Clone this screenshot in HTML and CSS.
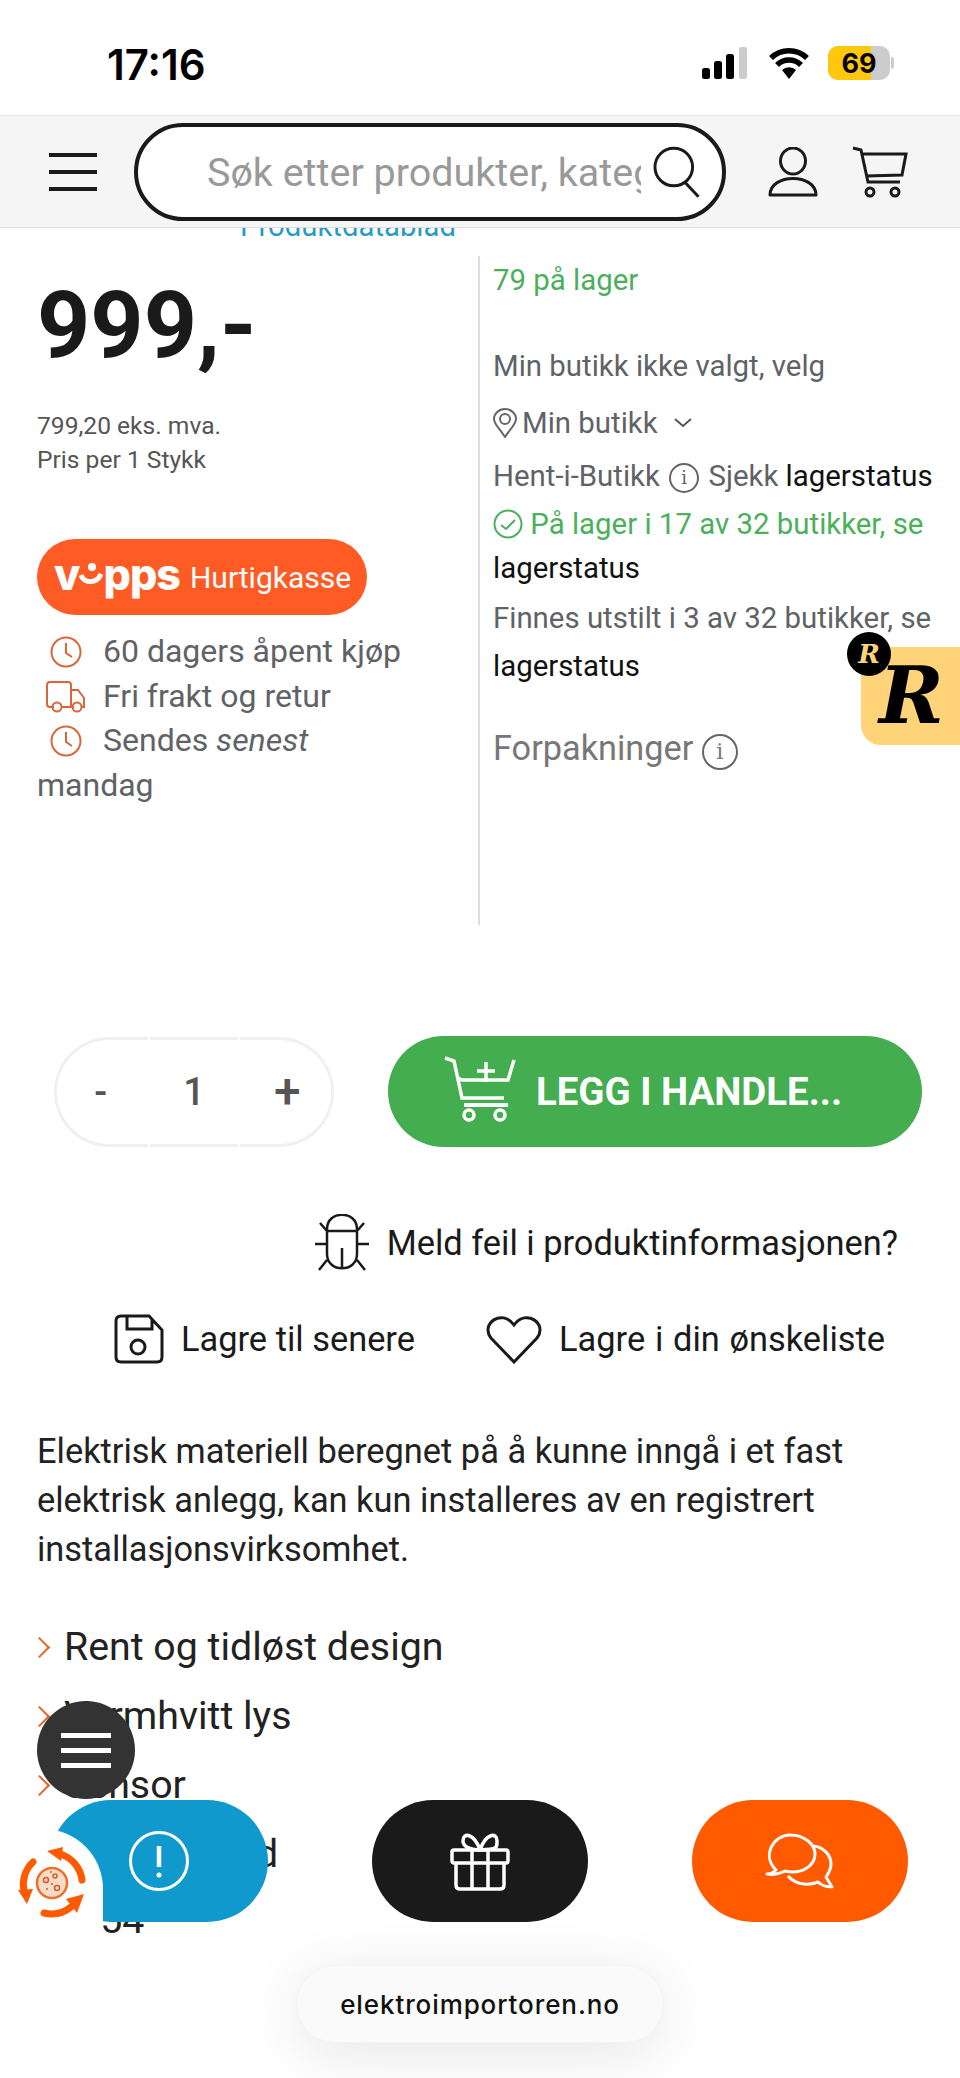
FILE: index.html

```html
<!DOCTYPE html>
<html lang="no">
<head>
    <meta charset="UTF-8">
    <title>Elektroimportoren</title>
    <link rel="stylesheet" href="styles.css">
</head>
<body>
<div class="page">
    <div class="status">
        <span class="time">17:16</span>
        <div class="status-icons">
            <svg width="48" height="32" viewBox="0 0 48 32"><rect x="0" y="21" width="8" height="11" rx="2.5" fill="#000"/><rect x="12" y="14" width="8" height="18" rx="2.5" fill="#000"/><rect x="24" y="7" width="8" height="25" rx="2.5" fill="#000"/><rect x="37" y="0" width="8" height="32" rx="2.5" fill="#ccc"/></svg>
            <svg width="42" height="32" viewBox="0 0 42 32"><path d="M3 11a26 26 0 0 1 36 0M9 18a17 17 0 0 1 24 0" fill="none" stroke="#000" stroke-width="5.5"/><path d="M14 23a10 10 0 0 1 14 0l-7 9z" fill="#000"/></svg>
            <div class="battery"><span class="battery-level"></span><span class="battery-text">69</span></div>
            <span class="battery-nub"></span>
        </div>
    </div>

    <div class="topbar">
        <svg class="burger" width="48" height="40" viewBox="0 0 48 40"><path d="M0 3h48M0 20h48M0 37h48" stroke="#1a1a1a" stroke-width="4"/></svg>
        <div class="search">
            <span class="search-text">Søk etter produkter, kategorier</span>
            <svg width="52" height="52" viewBox="0 0 52 52" fill="none" stroke="#1a1a1a" stroke-width="3"><circle cx="21" cy="21" r="19"/><path d="M32 36l14 15"/></svg>
        </div>
        <svg class="user" width="50" height="50" viewBox="0 0 50 50" fill="none" stroke="#1a1a1a" stroke-width="3"><ellipse cx="25" cy="14" rx="12.5" ry="13"/><path d="M2 48c0-22 46-22 46 0z" stroke-linejoin="round"/></svg>
        <svg class="cart" width="56" height="52" viewBox="0 0 56 52" fill="none" stroke="#1a1a1a" stroke-width="3"><path d="M1 2l8 2 7 32h32M10 8h44l-4 21-36 1"/><circle cx="18" cy="46" r="4"/><circle cx="43" cy="46" r="4"/></svg>
    </div>

    <div class="datablad"><a>Produktdatablad</a></div>

    <div class="columns">
        <div class="col-left">
            <div class="price">999,-</div>
            <p class="price-note">799,20 eks. mva.</p>
            <p class="price-note">Pris per 1 Stykk</p>
            <div class="vipps">
                <span class="vipps-logo">v<svg width="24" height="32" viewBox="0 0 24 32"><circle cx="13" cy="9" r="4" fill="#fff"/><path d="M2 17c3 9 16 9 20-1" fill="none" stroke="#fff" stroke-width="5"/></svg>pps</span>
                <span class="vipps-text">Hurtigkasse</span>
            </div>
            <div class="perks">
                <svg class="perk-icon" width="32" height="32" viewBox="0 0 32 32" fill="none" stroke="#d9663a" stroke-width="2"><circle cx="16" cy="16" r="14.5"/><path d="M16 7v10l6 4"/></svg>60 dagers åpent kjøp<br>
                <svg class="perk-icon truck" width="40" height="32" viewBox="0 0 40 32" fill="none" stroke="#d9663a" stroke-width="2"><path d="M8 26H4q-3 0-3-3V4q0-3 3-3h18q3 0 3 3v22H15M25 9h7l6 8v9h-3M25 26h3"/><circle cx="11" cy="26" r="4.5"/><circle cx="31" cy="26" r="4.5"/></svg>Fri frakt og retur<br>
                <svg class="perk-icon" width="32" height="32" viewBox="0 0 32 32" fill="none" stroke="#d9663a" stroke-width="2"><circle cx="16" cy="16" r="14.5"/><path d="M16 7v10l6 4"/></svg>Sendes <em>senest</em> mandag
            </div>
        </div>
        <div class="col-right">
            <p class="green stock-count">79 på lager</p>
            <p class="store-none">Min butikk ikke valgt, velg</p>
            <p class="store-pick">
                <svg width="24" height="30" viewBox="0 0 24 30" fill="none" stroke="#666" stroke-width="2"><path d="M12 29C6 20 1 16 1 11a11 10 0 0 1 22 0c0 5-5 9-11 18z"/><circle cx="12" cy="11" r="5"/></svg>
                <span>Min butikk</span>
                <svg class="chevron" width="18" height="10" viewBox="0 0 18 10" fill="none" stroke="#555" stroke-width="2"><path d="M1 1l8 7 8-7"/></svg>
            </p>
            <p class="pickup">Hent-i-Butikk <span class="info">i</span> Sjekk <span class="link">lagerstatus</span></p>
            <p class="green in-stock"><svg width="30" height="30" viewBox="0 0 30 30" fill="none" stroke="#4caf5c" stroke-width="2"><circle cx="15" cy="15" r="13.5"/><path d="M8 16l5 4 9-9"/></svg> På lager i 17 av 32 butikker, se</p>
            <p class="link status-link">lagerstatus</p>
            <p class="shown">Finnes utstilt i 3 av 32 butikker, se</p>
            <p class="link status-link2">lagerstatus</p>
            <p class="packs">Forpakninger <span class="info big">i</span></p>
        </div>
    </div>

    <div class="buy-row">
        <div class="qty"><span class="qty-minus">-</span><span class="qty-num">1</span><span class="qty-plus">+</span></div>
        <div class="buy">
            <svg width="74" height="66" viewBox="0 0 74 66" fill="none" stroke="#fff" stroke-width="3.5"><path d="M1 2l9 3 8 37h42M14 22l4 2h46l6-20M42 6v20M33 15h18" /><path d="M20 49h44" stroke-width="4"/><circle cx="25" cy="59" r="5"/><circle cx="56" cy="59" r="5"/></svg>
            <span>LEGG I HANDLE...</span>
        </div>
    </div>

    <div class="report">
        <svg width="58" height="58" viewBox="0 0 58 58" fill="none" stroke="#1a1a1a" stroke-width="2.5"><path d="M14 15c0-19 30-19 30 0v25c0 19-30 19-30 0zM14 17h30M29 34v20M14 30H2M44 30h12M14 17L7 9M44 17l7-8M14 46l-8 10M44 46l8 10"/></svg>
        <span>Meld feil i produktinformasjonen?</span>
    </div>

    <div class="save-row">
        <div class="save-item">
            <svg width="50" height="50" viewBox="0 0 50 50" fill="none" stroke="#1a1a1a" stroke-width="3"><path d="M7 2h28l13 14v27q0 5-5 5H7q-5 0-5-5V7q0-5 5-5zM13 2v13h25V6"/><circle cx="24" cy="33" r="7"/></svg>
            <span>Lagre til senere</span>
        </div>
        <div class="save-item wish">
            <svg width="56" height="50" viewBox="0 0 56 50" fill="none" stroke="#1a1a1a" stroke-width="3"><path d="M28 48L5 24C-6 10 16-6 28 11 40-6 62 10 51 24z"/></svg>
            <span>Lagre i din ønskeliste</span>
        </div>
    </div>

    <p class="desc">Elektrisk materiell beregnet på å kunne inngå i et fast elektrisk anlegg, kan kun installeres av en registrert installasjonsvirksomhet.</p>

    <ul class="features">
        <li>Rent og tidløst design</li>
        <li>Varmhvitt lys</li>
        <li>Sensor</li>
        <li class="tight">Tetthetsgrad</li>
        <li class="sub">IP 54</li>
    </ul>

    <!-- floating stuff on top of the page -->
    <div class="retool">
        <span class="retool-big">R</span>
        <span class="retool-small">R</span>
    </div>

    <div class="fab fab-blue">
        <svg width="60" height="60" viewBox="0 0 60 60" fill="none" stroke="#fff" stroke-width="3"><circle cx="30" cy="30" r="28.5"/><path d="M30 15v21" stroke-width="4.5"/><circle cx="30" cy="44" r="2.5" fill="#fff" stroke="none"/></svg>
    </div>
    <div class="fab fab-black">
        <svg width="60" height="60" viewBox="0 0 60 60" fill="none" stroke="#fff" stroke-width="3.5" stroke-linejoin="round"><rect x="2" y="19" width="56" height="13" rx="2"/><path d="M6 32v22q0 4 4 4h40q4 0 4-4V32M22 19v39M38 19v39M30 19C24 2 13 1 13 10q0 8 17 9c17-1 17-1 17-9 0-9-11-8-17 9z"/></svg>
    </div>
    <div class="fab fab-orange">
        <svg width="72" height="56" viewBox="0 0 72 56" fill="none" stroke="#fff" stroke-width="3" stroke-linejoin="round"><path d="M3 41c5 0 7-2 9-4C-3 22 10 2 26 2c14 0 25 9 25 19 0 12-14 21-30 17-6 3-13 4-18 3z"/><path d="M48 13c11 0 19 9 19 18 0 6-3 10-5 13l6 10c-6 0-11-2-14-5-12 5-24 1-30-6"/></svg>
    </div>
    <div class="logo-mask">
        <svg width="72" height="72" viewBox="0 0 72 72">
            <g fill="none" stroke="#ff5a00" stroke-width="7" stroke-linecap="round"><path d="M66 33A31 31 0 0 0 44 7"/><path d="M17 15A31 31 0 0 0 8 44"/><path d="M28 66A31 31 0 0 0 55 60"/></g>
            <g fill="#ff5a00"><path d="M31 4L47 0l-2 14z"/><path d="M11 57L2 43l15-1z"/><path d="M68 47L50 52l11 14z"/></g>
            <circle cx="36" cy="36" r="15" fill="#f9dcc6" stroke="#ee6f2e" stroke-width="2.5"/>
            <g fill="none" stroke="#d9562a" stroke-width="1.5"><circle cx="30" cy="33" r="2.5"/><circle cx="39" cy="29" r="2"/><circle cx="41" cy="41" r="2.5"/></g>
            <g fill="#d9562a"><circle cx="36" cy="37" r="1"/><circle cx="31" cy="42" r="1"/><circle cx="35" cy="25" r="1"/></g>
        </svg>
    </div>
    <div class="round-menu"><span></span><span></span><span></span></div>

    <div class="url-pill">elektroimportoren.no</div>
</div>
</body>
</html>
```

FILE: styles.css

```css
* { box-sizing: border-box; }
body { margin: 0; background: #fff; font-family: Roboto, "Liberation Sans", sans-serif; color: #555; }
p { margin: 0; }
.page { position: relative; width: 960px; height: 2078px; overflow: hidden; background: #fff; }

.status { height: 116px; display: flex; justify-content: space-between; align-items: center; padding: 0 66px 0 107px; border-bottom: 1px solid #e8e4e4; }
.time { font-family: Inter, sans-serif; font-weight: 600; font-size: 42px; color: #000; margin-top: 13px; }
.status-icons { display: flex; align-items: center; margin-top: 11px; }
.status-icons svg { margin-right: 18px; }
.battery { position: relative; width: 62px; height: 34px; border-radius: 10px; background: #ccc; overflow: hidden; display: flex; justify-content: center; align-items: center; }
.battery-level { position: absolute; left: 0; top: 0; width: 69%; height: 100%; background: #fdc70c; }
.battery-text { position: relative; font-family: Inter, sans-serif; font-weight: 700; font-size: 27px; color: #000; }
.battery-nub { width: 3px; height: 12px; background: #ccc; border-radius: 0 3px 3px 0; margin-left: 1px; }

.topbar { position: relative; height: 112px; background: #f5f5f5; border-bottom: 1px solid #ddd; display: flex; align-items: center; padding-left: 49px; }
.search { width: 592px; height: 98px; margin-left: 37px; border: 4.5px solid #1a1a1a; border-radius: 49px; background: #fff; display: flex; align-items: center; padding: 0 18px 0 69px; }
.search-text { width: 438px; overflow: hidden; white-space: nowrap; font-size: 39.5px; line-height: 50px; margin-top: 2px; color: #999; margin-right: 12px; }
.user { margin-left: 42px; }
.cart { margin-left: 34px; }

.datablad { height: 14px; overflow: hidden; display: flex; align-items: flex-end; padding-left: 240px; }
.datablad a { font-size: 29.3px; line-height: 34px; margin-bottom: -1px; color: #2a9ac4; flex: none; }

.columns { display: grid; grid-template-columns: 478px 1fr; height: 681px; padding-top: 14px; }
.col-left { padding: 0 70px 0 37px; }
.price { font-size: 93px; font-weight: 700; color: #1a1a1a; line-height: 100px; margin-top: 20px; }
.price-note { font-size: 24.6px; line-height: 34px; color: #555; }
.price-note:first-of-type { margin-top: 33px; }
.vipps { width: 330px; height: 76px; margin-top: 62px; border-radius: 38px; background: #ff5b24; color: #fff; display: flex; align-items: center; padding-left: 17px; }
.vipps-logo { font-family: Inter, sans-serif; font-weight: 800; font-size: 43px; letter-spacing: -1px; display: inline-flex; align-items: center; margin-right: 10px; line-height: 1; margin-top: -6px; }
.vipps-text { font-size: 30px; }
.perks { font-size: 32px; line-height: 44.5px; margin-top: 14px; color: #5f6266; }
.perk-icon { vertical-align: -6px; margin: 0 21px 0 13px; }
.perk-icon.truck { margin: 0 17px 0 9px; }

.col-right { border-left: 2px solid #ddd; padding-left: 13px; height: 669px; font-size: 29.4px; color: #5f6266; }
.green { color: #4caf5c; }
.link { color: #111; }
.stock-count { line-height: 34px; margin-top: 7px; }
.store-none { line-height: 34px; margin-top: 52px; }
.store-pick { display: flex; align-items: center; line-height: 34px; margin-top: 23px; }
.store-pick svg { margin-right: 5px; }
.store-pick .chevron { margin-left: 16px; }
.pickup { line-height: 34px; margin-top: 19px; }
.info { display: inline-block; width: 30px; height: 30px; border: 2px solid #666; border-radius: 50%; font-family: "DejaVu Serif", serif; font-size: 18px; line-height: 26px; text-align: center; vertical-align: 2px; margin: 0 2px; }
.in-stock { line-height: 34px; margin-top: 14px; }
.in-stock svg { vertical-align: -5px; }
.status-link { line-height: 34px; margin-top: 10px; }
.shown { line-height: 34px; margin-top: 16px; }
.status-link2 { line-height: 34px; margin-top: 14px; }
.packs { font-size: 34.3px; line-height: 40px; margin-top: 45px; color: #777; }
.info.big { width: 36px; height: 36px; font-size: 22px; line-height: 32px; margin: 0; vertical-align: 1px; }

.buy-row { display: flex; align-items: center; padding-left: 54px; margin-top: 113px; }
.qty { width: 280px; height: 110px; display: flex; gap: 2px; font-size: 38px; color: #555; font-weight: 500; }
.qty span { flex: 1; display: flex; align-items: center; justify-content: center; border: solid #f0f0f0; border-width: 3px 0; }
.qty-minus { border-left-width: 3px !important; border-radius: 55px 0 0 55px; padding-right: 4px; }
.qty-plus { border-right-width: 3px !important; border-radius: 0 55px 55px 0; font-size: 48px; padding-left: 4px; }
.buy { width: 534px; height: 111px; margin-left: 54px; border-radius: 56px; background: #43ad4f; color: #fff; display: flex; align-items: center; padding-left: 56px; font-size: 38.4px; font-weight: 700; white-space: nowrap; }
.buy svg { margin-right: 18px; margin-top: -6px; }

.report { display: flex; justify-content: flex-end; align-items: center; padding-right: 62px; margin-top: 67px; font-size: 34.4px; color: #1a1a1a; }
.report svg { margin-right: 16px; }
.save-row { display: flex; justify-content: space-between; padding: 0 75px 0 114px; margin-top: 42px; font-size: 34.4px; color: #1a1a1a; }
.save-item { display: flex; align-items: center; }
.save-item svg { margin-right: 17px; }
.wish { word-spacing: 1.2px; }

.desc { padding: 0 37px; margin-top: 63px; font-size: 34.4px; line-height: 49px; color: #222; }
.features { list-style: none; margin: 51px 0 0; padding: 0 0 0 64px; font-size: 39.3px; color: #222; }
.features li { position: relative; height: 69px; line-height: 44px; }
.features li::before { content: ""; position: absolute; left: -32px; top: 15px; width: 13px; height: 13px; border-top: 2.5px solid #e8622a; border-right: 2.5px solid #e8622a; transform: rotate(45deg); }
.features li.tight { letter-spacing: -.7px; }
.features li.sub { word-spacing: -9px; margin-top: -3px; }
.features li.sub::before { display: none; }

.retool { position: absolute; left: 861px; top: 647px; width: 99px; height: 98px; background: #ffd479; border-radius: 20px 0 0 20px; }
.retool-big { position: absolute; left: 18px; top: 5px; font-family: "DejaVu Serif", serif; font-weight: 700; font-style: italic; font-size: 78px; line-height: 88px; color: #000; }
.retool-small { position: absolute; left: -14px; top: -15px; width: 44px; height: 44px; border-radius: 50%; background: #000; color: #ffd479; font-family: "DejaVu Serif", serif; font-weight: 700; font-style: italic; font-size: 26px; line-height: 44px; text-align: center; }

.fab { position: absolute; top: 1800px; height: 122px; border-radius: 61px; display: flex; align-items: center; justify-content: center; }
.fab-blue { left: 50px; width: 218px; background: #0f99cc; }
.fab-black { left: 372px; width: 216px; background: #1a1a1a; }
.fab-orange { left: 692px; width: 216px; background: #ff5a00; }
.logo-mask { position: absolute; left: 0; top: 1829px; width: 103px; height: 125px; background: #fff; border-top-right-radius: 60px; padding: 18px 0 0 16px; }
.round-menu { position: absolute; left: 37px; top: 1701px; width: 98px; height: 98px; border-radius: 50%; background: #333; display: flex; flex-direction: column; align-items: center; justify-content: center; gap: 10px; }
.round-menu span { width: 50px; height: 5px; background: #fff; }

.url-pill { position: absolute; left: 296px; top: 1965px; width: 368px; height: 78px; border-radius: 39px; background: #fafafa; border: 1px solid #f4f4f4; box-shadow: 0 10px 60px rgba(0,0,0,.1); display: flex; align-items: center; justify-content: center; font-family: Inter, sans-serif; font-size: 26px; font-weight: 500; letter-spacing: .9px; color: #111; }
```
